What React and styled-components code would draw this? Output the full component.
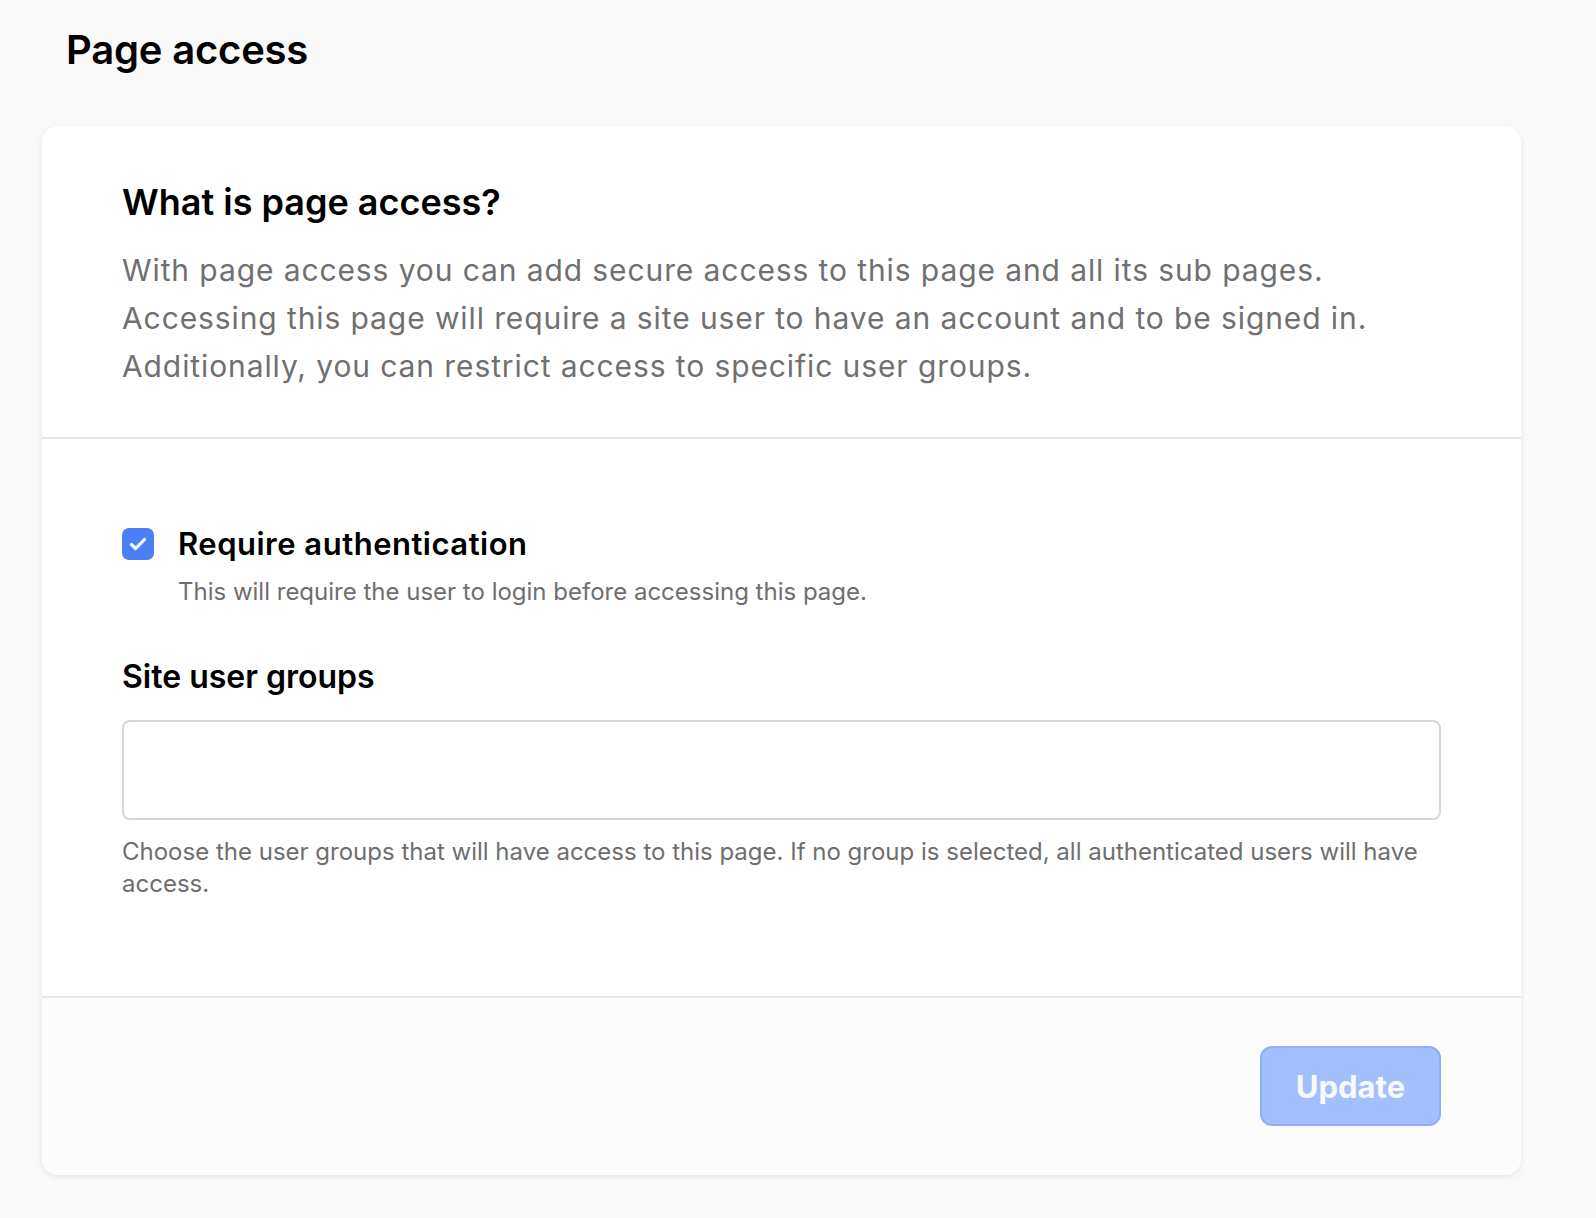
import React from 'react';
import styled, { createGlobalStyle } from 'styled-components';

const GlobalStyle = createGlobalStyle`
  body {
    margin: 0;
    background: #f9f9f9;
    font-family: Inter, "Noto Sans", sans-serif;
    color: #000;
  }
`;

const Page = styled.main`
  padding: 26px 75px 44px 42px;
`;

const PageTitle = styled.h1`
  margin: 0 0 52px 24px;
  font-size: 40px;
  line-height: 48px;
  font-weight: 600;
  letter-spacing: -0.2px;
`;

const Card = styled.section`
  background: #fff;
  border-radius: 16px;
  box-shadow: 0 2px 6px rgba(0, 0, 0, 0.08);
  overflow: hidden;
`;

const Section = styled.div`
  padding: ${props => props.pad};
  border-bottom: 2px solid #e5e5e5;
`;

const Heading = styled.h2`
  margin: 5px 0 22px;
  font-size: 36px;
  line-height: 44px;
  font-weight: 600;
`;

const Intro = styled.p`
  margin: 0;
  font-size: 30px;
  line-height: 48px;
  letter-spacing: 0.9px;
  color: #707070;
`;

const CheckRow = styled.label`
  display: flex;
  align-items: center;
  gap: 24px;
  font-size: 31px;
  line-height: 36px;
  font-weight: 600;
  letter-spacing: 0.5px;
`;

const Box = styled.span`
  width: 32px;
  height: 32px;
  border-radius: 7px;
  background: #4a7ff6;
  display: flex;
  align-items: center;
  justify-content: center;
  flex-shrink: 0;
`;

const Hint = styled.p`
  margin: ${props => props.m || '0'};
  font-size: 24px;
  line-height: 32px;
  color: #6e6e6e;
`;

const Label = styled.h3`
  margin: 49px 0 23px;
  font-size: 32px;
  line-height: 40px;
  font-weight: 600;
`;

const Field = styled.div`
  height: 96px;
  border: 2px solid #d6d6d6;
  border-radius: 8px;
  background: #fff;
`;

const Footer = styled.div`
  background: #fcfcfc;
  padding: 48px 80px 49px;
  display: flex;
  justify-content: flex-end;
`;

const Button = styled.button`
  width: 181px;
  height: 80px;
  border: 2px solid #8fadf9;
  border-radius: 12px;
  background: #a3bffc;
  color: #f7f9ff;
  font-family: Inter, "Noto Sans", sans-serif;
  font-size: 31px;
  font-weight: 700;
`;

export default function App() {
  return (
    <>
      <GlobalStyle />
      <Page>
        <PageTitle>Page access</PageTitle>
        <Card>
          <Section pad="49px 80px 47px">
            <Heading>What is page access?</Heading>
            <Intro>
              With page access you can add secure access to this page and all its sub pages.
              <br />
              Accessing this page will require a site user to have an account and to be signed in.
              <br />
              Additionally, you can restrict access to specific user groups.
            </Intro>
          </Section>
          <Section pad="87px 80px 96px">
            <CheckRow>
              <Box>
                <svg width="22" height="22" viewBox="0 0 22 22" fill="none">
                  <path d="M4.5 11.5l4.2 4L17.5 6.5" stroke="#fff" strokeWidth="3.2" strokeLinecap="round" strokeLinejoin="round" />
                </svg>
              </Box>
              Require authentication
            </CheckRow>
            <Hint m="14px 0 0 56px">This will require the user to login before accessing this page.</Hint>
            <Label>Site user groups</Label>
            <Field />
            <Hint m="16px 0 0">
              Choose the user groups that will have access to this page. If no group is selected, all authenticated users will have access.
            </Hint>
          </Section>
          <Footer>
            <Button>Update</Button>
          </Footer>
        </Card>
      </Page>
    </>
  );
}
